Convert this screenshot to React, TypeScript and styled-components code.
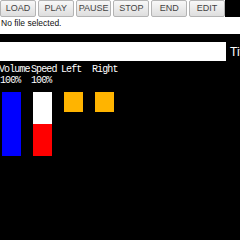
import React from "react";
import styled, { createGlobalStyle } from "styled-components";

const Global = createGlobalStyle`
  html, body { margin: 0; padding: 0; background: #000; }
  body { width: 240px; height: 240px; overflow: hidden; }
`;

const Page = styled.div`
  width: 240px;
  height: 240px;
  background: #000;
  display: flex;
  flex-direction: column;
  overflow: hidden;
`;

const Toolbar = styled.div`
  width: 225px;
  height: 17px;
  background: #fff;
  display: grid;
  grid-template-columns: repeat(6, 1fr);
  column-gap: 2px;
`;

const Button = styled.button`
  margin: 0;
  padding: 0;
  height: 17px;
  border: 1px solid #b4b4b4;
  border-radius: 2px;
  background: linear-gradient(#f8f8f8, #dedede);
  color: #444;
  font-family: "Liberation Sans", Arial, sans-serif;
  font-size: 9px;
  line-height: 15px;
  text-align: center;
`;

const FileRow = styled.div`
  height: 17px;
  background: #fff;
  color: #111;
  font-family: "Liberation Sans", Arial, sans-serif;
  font-size: 8.5px;
  line-height: 12px;
  padding-left: 1px;
`;

const InputRow = styled.div`
  margin-top: 8px;
  height: 19px;
  display: flex;
  align-items: center;
  gap: 4px;
`;

const TextBox = styled.div`
  width: 226px;
  height: 19px;
  background: #fff;
  flex: none;
`;

const InputLabel = styled.span`
  color: #fff;
  font-family: "Liberation Sans", Arial, sans-serif;
  font-size: 12px;
  white-space: nowrap;
`;

const Meters = styled.div`
  margin-top: 3px;
  display: grid;
  grid-template-columns: repeat(4, 31px);
  padding-left: 2px;
`;

const Meter = styled.div`
  display: flex;
  flex-direction: column;
  color: #fff;
  font-family: "Liberation Mono", monospace;
  font-size: 10px;
  line-height: 11px;
  letter-spacing: -0.9px;
  white-space: nowrap;
`;

const Label = styled.div<{ $shift: number }>`
  height: 11px;
  margin-left: ${(p) => p.$shift}px;
`;

const Value = styled.div`
  height: 11px;
  margin-left: -2px;
`;

const Bar = styled.div<{ $h: number; $bg: string }>`
  margin-top: 6px;
  width: 19px;
  height: ${(p) => p.$h}px;
  background: ${(p) => p.$bg};
  display: flex;
  flex-direction: column;
`;

const Fill = styled.div<{ $bg: string }>`
  flex: 1;
  background: ${(p) => p.$bg};
`;

const Indicator = styled.div`
  margin-top: 17px;
  width: 19px;
  height: 20px;
  background: #ffb400;
`;

export default function App() {
  const buttons = ["LOAD", "PLAY", "PAUSE", "STOP", "END", "EDIT"];
  return (
    <>
      <Global />
      <Page>
        <Toolbar>
          {buttons.map((b) => (
            <Button key={b}>{b}</Button>
          ))}
        </Toolbar>
        <FileRow>No file selected.</FileRow>
        <InputRow>
          <TextBox />
          <InputLabel>Title</InputLabel>
        </InputRow>
        <Meters>
          <Meter>
            <Label $shift={-3}>Volume</Label>
            <Value>100%</Value>
            <Bar $h={64} $bg="#0000ff" />
          </Meter>
          <Meter>
            <Label $shift={-2}>Speed</Label>
            <Value>100%</Value>
            <Bar $h={64} $bg="#ffffff">
              <Fill $bg="#ffffff" />
              <Fill $bg="#ff0000" />
            </Bar>
          </Meter>
          <Meter>
            <Label $shift={-3}>Left</Label>
            <Indicator />
          </Meter>
          <Meter>
            <Label $shift={-3}>Right</Label>
            <Indicator />
          </Meter>
        </Meters>
      </Page>
    </>
  );
}
